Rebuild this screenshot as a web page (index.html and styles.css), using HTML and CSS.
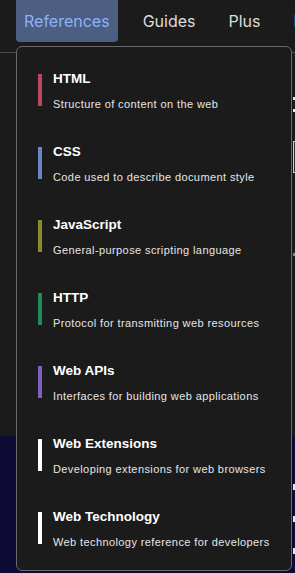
FILE: index.html
```html
<!DOCTYPE html>
<html lang="en">
<head>
    <meta charset="UTF-8">
    <meta name="viewport" content="width=device-width, initial-scale=1.0">
    <title>References menu</title>
    <link rel="stylesheet" href="styles.css">
</head>
<body>
    <header class="top-bar">
        <nav class="main-nav">
            <div class="nav-item active">
                <a href="#">References</a>
                <div class="dropdown">
                    <a class="menu-item html" href="#">
                        <span class="bar"></span>
                        <span class="menu-text">
                            <span class="menu-title">HTML</span>
                            <span class="menu-desc">Structure of content on the web</span>
                        </span>
                    </a>
                    <a class="menu-item css" href="#">
                        <span class="bar"></span>
                        <span class="menu-text">
                            <span class="menu-title">CSS</span>
                            <span class="menu-desc">Code used to describe document style</span>
                        </span>
                    </a>
                    <a class="menu-item js" href="#">
                        <span class="bar"></span>
                        <span class="menu-text">
                            <span class="menu-title">JavaScript</span>
                            <span class="menu-desc">General-purpose scripting language</span>
                        </span>
                    </a>
                    <a class="menu-item http" href="#">
                        <span class="bar"></span>
                        <span class="menu-text">
                            <span class="menu-title">HTTP</span>
                            <span class="menu-desc">Protocol for transmitting web resources</span>
                        </span>
                    </a>
                    <a class="menu-item apis" href="#">
                        <span class="bar"></span>
                        <span class="menu-text">
                            <span class="menu-title">Web APIs</span>
                            <span class="menu-desc">Interfaces for building web applications</span>
                        </span>
                    </a>
                    <a class="menu-item" href="#">
                        <span class="bar"></span>
                        <span class="menu-text">
                            <span class="menu-title">Web Extensions</span>
                            <span class="menu-desc">Developing extensions for web browsers</span>
                        </span>
                    </a>
                    <a class="menu-item" href="#">
                        <span class="bar"></span>
                        <span class="menu-text">
                            <span class="menu-title">Web Technology</span>
                            <span class="menu-desc">Web technology reference for developers</span>
                        </span>
                    </a>
                </div>
            </div>
            <div class="nav-item"><a href="#">Guides</a></div>
            <div class="nav-item"><a href="#">Plus</a></div>
            <div class="nav-item"><a href="#">Blog</a></div>
        </nav>
    </header>
    <main>
        <section class="page-top">
            <div class="content">
                <div class="dash"></div>
                <div class="dash"></div>
                <div class="search-box"></div>
                <div class="dash small"></div>
            </div>
        </section>
        <section class="banner">
            <div class="content">
                <div class="dash"></div>
                <div class="dash"></div>
                <div class="dash"></div>
            </div>
        </section>
    </main>
</body>
</html>
```

FILE: styles.css
```css
body {
    margin: 0;
    height: 573px;
    overflow: hidden;
    background-color: #1b1b1b;
    font-family: Inter, "Liberation Sans", sans-serif;
}
a {
    text-decoration: none;
}
.top-bar {
    height: 53px;
    box-sizing: border-box;
    border-bottom: 1px solid #4d4d4d;
    background-color: #1b1b1b;
    position: relative;
    z-index: 10;
}
.main-nav {
    display: flex;
    gap: 17px;
    padding-left: 16px;
    white-space: nowrap; /* la barra sigue fuera de la ventana */
}
.nav-item {
    position: relative;
}
.nav-item > a {
    display: flex;
    align-items: center;
    height: 42px;
    padding: 0 8px;
    color: #dcdcdc;
    font-size: 16px;
    border-radius: 0 0 4px 4px;
}
.nav-item.active > a {
    background-color: #4c5e82;
    color: #8db3f8;
}

/* Menu desplegable */
.dropdown {
    position: absolute;
    top: 46px;
    left: 0;
    width: 276px;
    box-sizing: border-box;
    padding: 24px 21px 21px;
    display: flex;
    flex-direction: column;
    gap: 33px;
    background-color: #1b1b1b;
    border: 1px solid #6a6a6a;
    border-radius: 6px;
    font-family: "Liberation Sans", Arial, sans-serif;
}
.menu-item {
    display: flex;
    align-items: flex-start;
    gap: 11px;
}
.bar {
    width: 4px;
    height: 32px;
    margin-top: 3px;
    background-color: #ffffff;
    flex-shrink: 0;
}
.html .bar { background-color: #b8485c; }
.css .bar { background-color: #6c85c6; }
.js .bar { background-color: #8a8a2a; }
.http .bar { background-color: #1f8a57; }
.apis .bar { background-color: #7b62c0; }

.menu-text {
    display: flex;
    flex-direction: column;
    gap: 10px;
}
.menu-title {
    color: #ffffff;
    font-size: 13.5px;
    font-weight: bold;
    line-height: 16px;
}
.menu-desc {
    color: #e6e6e6;
    font-size: 11px;
    line-height: 14px;
    letter-spacing: 0.4px;
    white-space: nowrap;
}

/* Contenido de la pagina detras del menu */
.page-top {
    height: 383px;
    background-color: #1b1b1b;
}
.banner {
    height: 137px;
    background-color: #0e0c36;
}
.content {
    padding-left: 293px;
    display: flex;
    flex-direction: column;
}
.page-top .content {
    padding-top: 44px;
}
.dash {
    width: 20px;
    height: 3px;
    margin-bottom: 9px;
    background-color: #e8e8e8;
}
.dash.small {
    margin-top: 80px;
    background-color: #8a8a8a;
}
.search-box {
    width: 40px;
    height: 30px;
    margin-top: 20px;
    border: 1px solid #cfcfcf;
    background-color: #2b2b2b;
}
.banner .content {
    padding-top: 48px;
    gap: 26px;
}
.banner .dash {
    margin: 0;
    height: 6px;
}
```
